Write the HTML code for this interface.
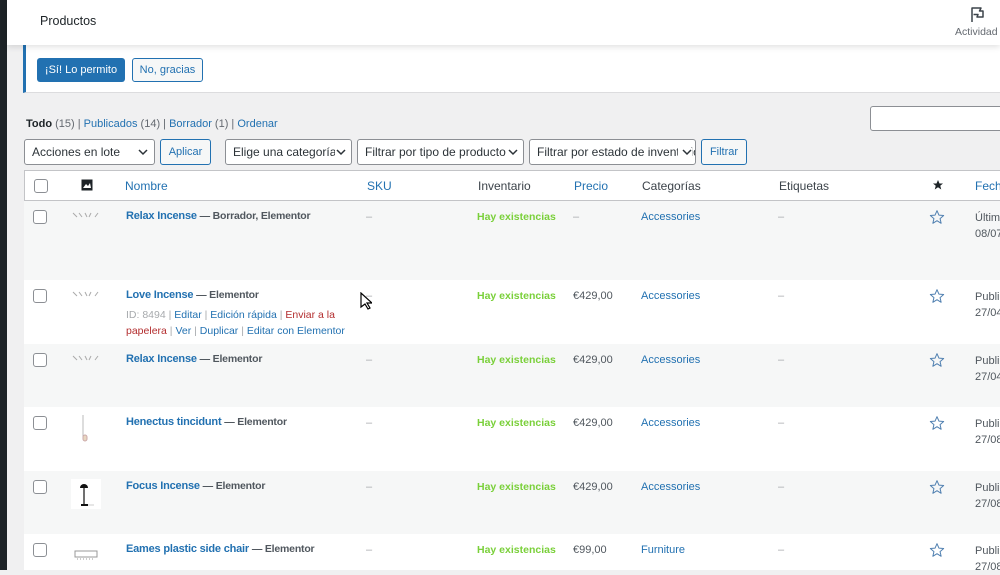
<!DOCTYPE html>
<html><head><meta charset="utf-8"><style>
*{box-sizing:border-box;margin:0;padding:0}
body{width:1000px;height:570px;overflow:hidden;background:#f0f0f1;font-family:"Liberation Sans",sans-serif;position:relative;color:#3c434a}
.a{position:absolute;white-space:nowrap}
.lnk{color:#2271b1}
.sel{position:absolute;top:139px;height:26px;background:#fff;border:1px solid #8c8f94;border-radius:3px;font-size:12px;color:#2c3338;padding:5px 7px;overflow:hidden;white-space:nowrap}
.sel svg{position:absolute;right:6px;top:8px}
.btn2{position:absolute;height:26px;border:1px solid #2271b1;border-radius:3px;color:#2271b1;font-size:11px;background:#f6f7f7;text-align:center;line-height:24px}
.row{position:absolute;left:24px;width:976px}
.cb{position:absolute;left:9px;width:14px;height:14px;border:1px solid #8c8f94;border-radius:3px;background:#fff}
.t{position:absolute;font-size:11px;white-space:nowrap}
.nm{font-size:11px;color:#2271b1;font-weight:bold;letter-spacing:-0.2px}
.nm span{color:#50575e;font-size:10.5px}
.stk{color:#7ad03a;font-weight:bold}
.dash{color:#a7aaad}
</style></head><body>
<div class="a" style="left:0;top:0;width:7px;height:570px;background:#1d2327"></div>
<div class="a" style="left:7px;top:0;width:993px;height:45px;background:#fff;box-shadow:0 2px 6px rgba(0,0,0,.12);z-index:2"></div>
<div class="a" style="left:40px;top:14px;font-size:12.5px;color:#1d2327;z-index:3">Productos</div>
<svg class="a" style="left:968px;top:5px;z-index:3" width="18" height="18" viewBox="0 0 18 18"><path d="M4 17V3h9l-1.5 3H15v6H9l1-2.5H5.5" fill="none" stroke="#3c434a" stroke-width="1.5" stroke-linejoin="round"/></svg>
<div class="a" style="left:955px;top:26px;font-size:10.5px;color:#646970;z-index:3">Actividad</div>
<div class="a" style="left:23px;top:45px;width:977px;height:48px;background:#fff;border-left:3px solid #2271b1;border-bottom:1px solid #dcdcde"></div>
<div class="a" style="left:37px;top:58px;width:88px;height:24px;background:#2271b1;border-radius:3px;color:#fff;font-size:11px;text-align:center;line-height:24px">¡Sí! Lo permito</div>
<div class="a" style="left:132px;top:58px;width:71px;height:24px;border:1px solid #2271b1;border-radius:3px;color:#2271b1;font-size:11px;text-align:center;line-height:22px;background:#f6f7f7">No, gracias</div>
<div class="a" style="left:26px;top:118px;font-size:11px;color:#646970"><b style="color:#1d2327">Todo</b> (15) | <span class="lnk">Publicados</span> (14) | <span class="lnk">Borrador</span> (1) | <span class="lnk">Ordenar</span></div>
<div class="a" style="left:870px;top:106px;width:140px;height:25px;background:#fff;border:1px solid #8c8f94;border-radius:3px"></div>
<div class="sel" style="left:24px;width:131px">Acciones en lote<svg width="10" height="8"><path d="M1 2l4 4 4-4" fill="none" stroke="#2c3338" stroke-width="1.5"/></svg></div>
<div class="btn2" style="left:160px;top:139px;width:51px">Aplicar</div>
<div class="sel" style="left:225px;width:127px">Elige una categoría&nbsp;&nbsp;&nbsp;<svg width="12" height="8" style="background:#fff;right:4px"><path d="M2 2l4 4 4-4" fill="none" stroke="#2c3338" stroke-width="1.5"/></svg></div>
<div class="sel" style="left:357px;width:167px">Filtrar por tipo de producto&nbsp;&nbsp;&nbsp;<svg width="12" height="8" style="background:#fff;right:4px"><path d="M2 2l4 4 4-4" fill="none" stroke="#2c3338" stroke-width="1.5"/></svg></div>
<div class="sel" style="left:529px;width:167px">Filtrar por estado de inventario<svg width="14" height="8" style="background:#fff;right:3px"><path d="M5 2l4 4 4-4" fill="none" stroke="#2c3338" stroke-width="1.5"/></svg></div>
<div class="btn2" style="left:701px;top:139px;width:46px">Filtrar</div>
<div class="row" style="top:170px;height:31px;background:#fff;border:1px solid #c3c4c7;border-right:none">
<div class="cb" style="top:8px"></div>
<svg class="a" style="left:56px;top:8px" width="12" height="12" viewBox="0 0 12 12"><rect x="0.5" y="0.5" width="11" height="11" fill="#1d2327"/><path d="M2 9l3-4 2 2 2-3 1 5z" fill="#fff"/></svg>
<div class="t lnk" style="left:100px;top:8px;font-size:12px">Nombre</div>
<div class="t lnk" style="left:342px;top:8px;font-size:12px">SKU</div>
<div class="t" style="left:453px;top:8px;font-size:12px">Inventario</div>
<div class="t lnk" style="left:549px;top:8px;font-size:12px">Precio</div>
<div class="t" style="left:617px;top:8px;font-size:12px">Categorías</div>
<div class="t" style="left:754px;top:8px;font-size:12px">Etiquetas</div>
<svg class="a" style="left:907px;top:8px" width="12" height="12" viewBox="0 0 24 24"><path d="M12 2l3 7h7l-5.5 4.5 2 7.5-6.5-4.5-6.5 4.5 2-7.5L2 9h7z" fill="#1d2327"/></svg>
<div class="t lnk" style="left:950px;top:8px;font-size:12px">Fecha</div>
</div>
<div class="row" style="top:201px;height:79px;background:#f6f7f7"></div>
<div class="row" style="top:280px;height:64px;background:#fff"></div>
<div class="row" style="top:344px;height:63px;background:#f6f7f7"></div>
<div class="row" style="top:407px;height:64px;background:#fff"></div>
<div class="row" style="top:471px;height:63px;background:#f6f7f7"></div>
<div class="row" style="top:534px;height:36px;background:#fff"></div>
<div id="rows"></div>
<svg class="a" style="left:360px;top:292px" width="12" height="18" viewBox="0 0 12 18"><path d="M1 1v14l4-3 3 5 2-1-3-5h5z" fill="#fff" stroke="#000" stroke-width="1.2"/></svg>
<script>
var R=[[201,'Relax Incense','Borrador, Elementor','–','Accessories','Última','08/07','g'],
[280,'Love Incense','Elementor','€429,00','Accessories','Publicado','27/04','g'],
[344,'Relax Incense','Elementor','€429,00','Accessories','Publicado','27/04','g'],
[407,'Henectus tincidunt','Elementor','€429,00','Accessories','Publicado','27/08','l'],
[471,'Focus Incense','Elementor','€429,00','Accessories','Publicado','27/08','d'],
[534,'Eames plastic side chair','Elementor','€99,00','Furniture','Publicado','27/08','c']];
var h='';
R.forEach(function(r){var y=r[0];
h+='<div class="cb" style="left:33px;top:'+(y+9)+'px"></div>';
var th='';
if(r[7]=='g')th='<svg class="a" style="left:71px;top:'+(y+10)+'px" width="30" height="8"><path d="M2 2l4 4M8 2l3 4M14 2l2 4M20 2l-2 4M27 2l-3 4" stroke="#aaa" fill="none"/></svg>';
if(r[7]=='l')th='<svg class="a" style="left:78px;top:'+(y+8)+'px" width="14" height="28"><path d="M5 0v22" stroke="#bbb"/><rect x="5" y="20" width="4" height="6" rx="2" fill="#e8d6c0" stroke="#caa"/></svg>';
if(r[7]=='d')th='<div class="a" style="left:71px;top:'+(y+8)+'px;width:30px;height:30px;background:#fff"></div><svg class="a" style="left:73px;top:'+(y+10)+'px" width="26" height="26"><path d="M7 7a4 4 0 0 1 8 0z" fill="#111"/><path d="M11 7v16" stroke="#111" stroke-width="1.2"/><path d="M8 24h7" stroke="#111" stroke-width="2"/><path d="M15 24h6" stroke="#ccc"/></svg>';
if(r[7]=='c')th='<svg class="a" style="left:74px;top:'+(y+16)+'px" width="24" height="10"><rect x="1" y="1" width="22" height="6" fill="#fff" stroke="#999"/><path d="M3 9h18" stroke="#999" stroke-dasharray="1 2"/></svg>';
h+=th;
h+='<div class="t nm" style="left:126px;top:'+(y+9)+'px">'+r[1]+' <span>— '+r[2]+'</span></div>';
h+='<div class="t dash" style="left:366px;top:'+(y+10)+'px">–</div>';
h+='<div class="t stk" style="left:477px;top:'+(y+10)+'px;font-size:10.5px">Hay existencias</div>';
h+='<div class="t" style="left:573px;top:'+(y+10)+'px;color:'+(r[3]=='–'?'#a7aaad':'#50575e')+'">'+r[3]+'</div>';
h+='<div class="t lnk" style="left:641px;top:'+(y+10)+'px">'+r[4]+'</div>';
h+='<div class="t dash" style="left:778px;top:'+(y+10)+'px">–</div>';
h+='<svg class="a" style="left:929px;top:'+(y+8)+'px" width="16" height="16" viewBox="0 0 24 24"><path d="M12 2.5l2.9 6.6 7.1.6-5.4 4.7 1.6 7-6.2-3.8-6.2 3.8 1.6-7L2 9.7l7.1-.6z" fill="none" stroke="#4f7fb0" stroke-width="1.5" stroke-linejoin="round"/></svg>';
h+='<div class="t" style="left:975px;top:'+(y+9)+'px;color:#50575e;line-height:16px">'+r[5]+'<br>'+r[6]+'/2023</div>';
});
h+='<div class="t" style="left:126px;top:307px;color:#a7aaad;font-size:10.5px;line-height:16px">ID: 8494 | <span class="lnk">Editar</span> | <span class="lnk">Edición rápida</span> | <span style="color:#b32d2e">Enviar a la</span><br><span style="color:#b32d2e">papelera</span> | <span class="lnk">Ver</span> | <span class="lnk">Duplicar</span> | <span class="lnk">Editar con Elementor</span></div>';
document.getElementById('rows').innerHTML=h;
</script>
</body></html>
